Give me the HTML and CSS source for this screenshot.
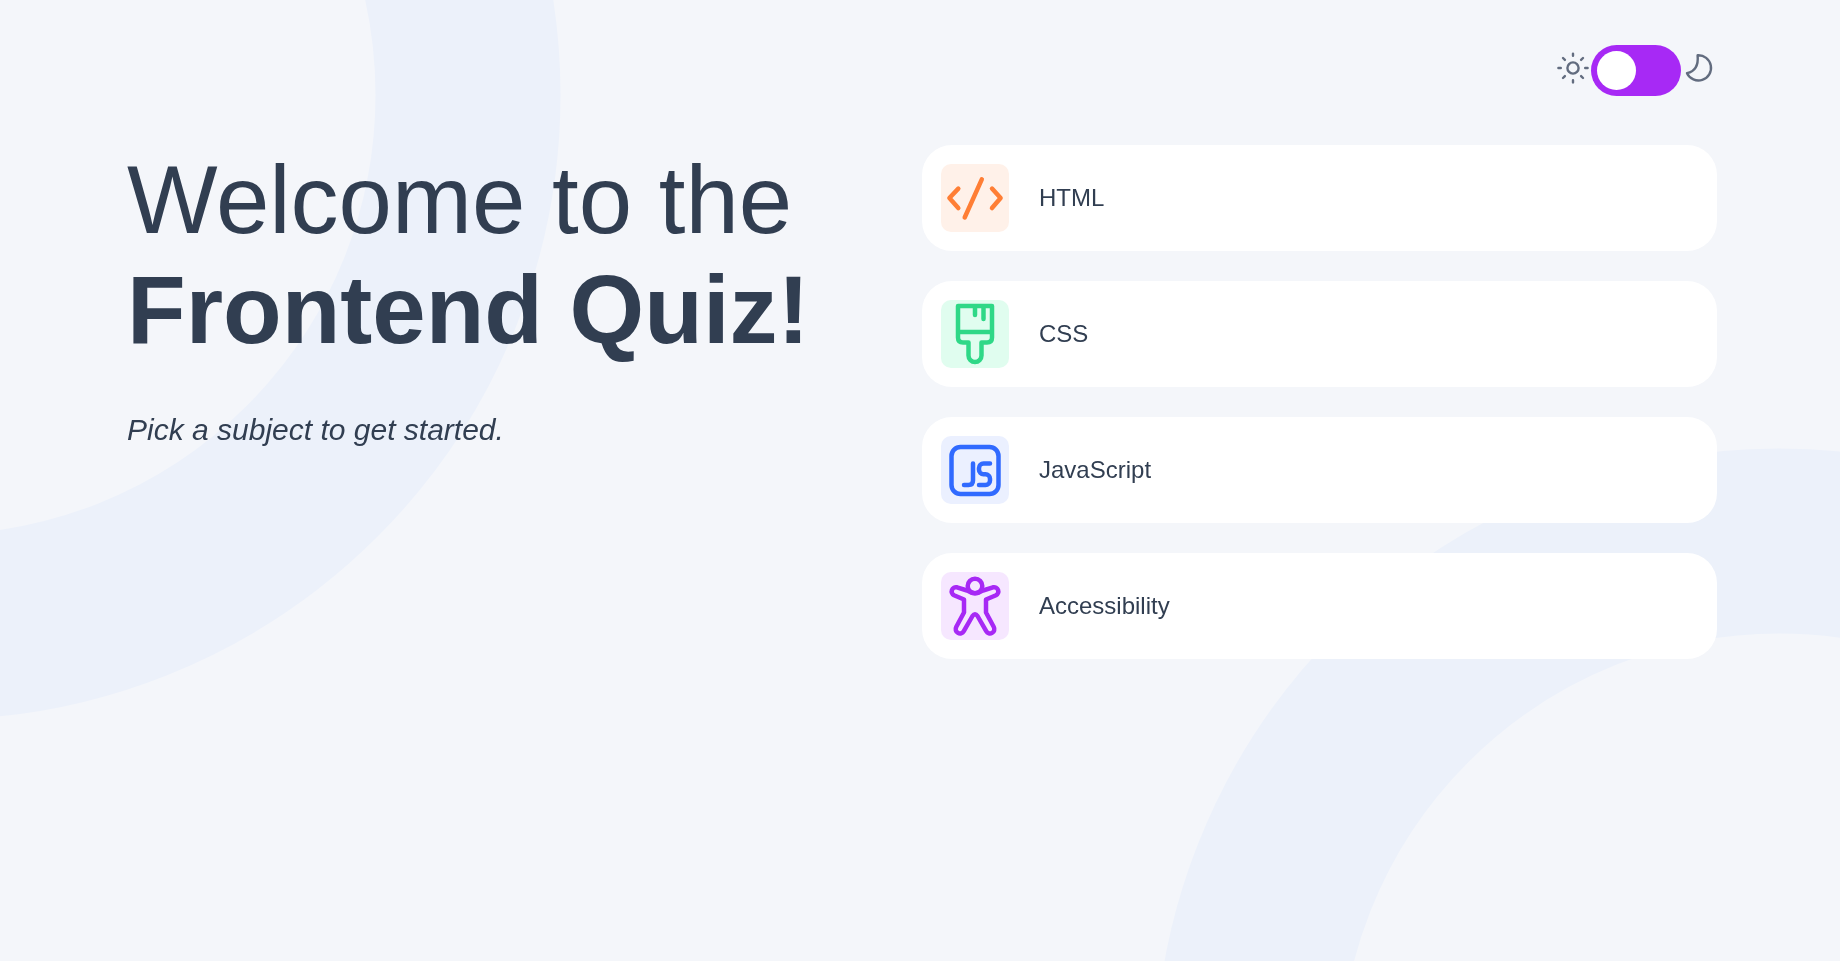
FILE: index.html
```html
<!DOCTYPE html>
<html lang="en">
<head>
<meta charset="utf-8">
<meta name="viewport" content="width=device-width, initial-scale=1">
<title>Frontend Quiz</title>
<link rel="stylesheet" href="styles.css">
</head>
<body>
<svg class="backdrop" viewBox="0 0 1840 1227" aria-hidden="true">
  <circle cx="-64" cy="95" r="532"/>
  <circle cx="1779" cy="1073" r="532"/>
</svg>
<div class="page">
  <header class="header">
    <svg class="mode-icon" viewBox="0 0 32 32" aria-hidden="true">
      <circle cx="16" cy="16" r="5.6"/>
      <path d="M16 1.6v2.2M16 28.2v2.2M1.4 16h2.4M28.2 16h2.4M6 6l1.9 1.9M24.1 24.1l1.9 1.9M6 26l1.9-1.9M24.1 7.9l1.9-1.9"/>
    </svg>
    <input class="switch" type="checkbox" role="switch" aria-label="Dark mode">
    <svg class="mode-icon" viewBox="2 0 32 32" aria-hidden="true">
      <path d="M16.6 3.3A12.6 12.6 0 1 1 6 21.2C13.5 19.5 17.6 13.5 16.600 3.3z"/>
    </svg>
  </header>
  <main class="main">
    <section class="intro">
      <h1 class="title">Welcome to the<br><strong>Frontend Quiz!</strong></h1>
      <p class="hint">Pick a subject to get started.</p>
    </section>
    <section class="subjects">
      <button class="subject" type="button">
        <svg class="badge html" viewBox="0 0 68 68" aria-hidden="true">
          <path d="M17.3 24.6L8.4 34l8.900 10M51 24.600L59.600 34l-8.600 10M40.800 15.300L23.700 53.500"/>
        </svg>
        <span>HTML</span>
      </button>
      <button class="subject" type="button">
        <svg class="badge css" viewBox="0 0 68 68" aria-hidden="true">
          <path d="M17 6h34v31.500q0 5-5 5H40.500v13a6.500 6.500 0 0 1-13 0v-13H22q-5 0-5-5zM17 32h34M34 6v9M42.500 6v13"/>
        </svg>
        <span>CSS</span>
      </button>
      <button class="subject" type="button">
        <svg class="badge js" viewBox="0 0 68 68" aria-hidden="true">
          <rect x="10.500" y="11" width="47" height="47" rx="9"/>
          <path d="M32 27.500v17q0 4.500-4.500 4.500H23M49 27.500H42.500a4.500 4.500 0 0 0-4.500 4.500v1.700a4.500 4.500 0 0 0 4.500 4.500h2a4.500 4.500 0 0 1 4.500 4.500v1.800a4.500 4.500 0 0 1-4.500 4.500H38"/>
        </svg>
        <span>JavaScript</span>
      </button>
      <button class="subject" type="button">
        <svg class="badge a11y" viewBox="0 0 68 68" aria-hidden="true">
          <circle cx="34" cy="14" r="7.300"/>
          <path d="M26 18.500l-10-3.200a4.300 4.300 0 0 0-3 8L23 27.500V40.500L15.200 55a4.300 4.300 0 0 0 7.600 4.200L31.500 44q2.500-3.500 5 0l8.700 15.200A4.300 4.300 0 0 0 52.800 55L45 40.500V27.500l10-4.200a4.300 4.300 0 0 0-3-8L42 18.500Q34 24 26 18.500z"/>
        </svg>
        <span>Accessibility</span>
      </button>
    </section>
  </main>
</div>
</body>
</html>
```
FILE: styles.css
```css
* {
  box-sizing: border-box;
}

body {
  margin: 0;
  min-height: 100vh;
  background: #f4f6fa;
  color: #313e51;
  font-family: "Liberation Sans", Arial, sans-serif;
}

.backdrop {
  position: fixed;
  top: 0;
  left: 0;
  z-index: -1;
  width: 100%;
  fill: none;
  stroke: #ecf1fa;
  stroke-width: 185;
}

.page {
  padding: 45px 123px 45px 127px;
}

.header {
  display: flex;
  justify-content: flex-end;
  gap: 2px;
  padding-right: 2px;
}

.mode-icon {
  width: 32px;
  height: 32px;
  margin-top: 7px;
  fill: none;
  stroke: #626c7f;
  stroke-width: 2.4;
  stroke-linecap: round;
  stroke-linejoin: round;
}

.switch {
  appearance: none;
  display: flex;
  align-items: center;
  width: 90px;
  height: 51px;
  margin: 0;
  padding: 6px;
  border-radius: 26px;
  background: #a729f5;
  cursor: pointer;
}

.switch::before {
  content: "";
  width: 39px;
  height: 39px;
  border-radius: 50%;
  background: #fff;
}

.switch:checked {
  justify-content: flex-end;
}

.main {
  display: grid;
  grid-template-columns: 1fr 1fr;
  margin-top: 49px;
}

.title {
  margin: 0;
  font-size: 96px;
  font-weight: 400;
  line-height: 110px;
}

.title strong {
  font-weight: 700;
}

.hint {
  margin: 48px 0 0;
  font-size: 30px;
  font-style: italic;
  line-height: 34px;
}

.subjects {
  display: flex;
  flex-direction: column;
  gap: 30px;
}

.subject {
  display: flex;
  align-items: center;
  gap: 30px;
  padding: 19px;
  border: 0;
  border-radius: 30px;
  background: #fff;
  color: inherit;
  font: inherit;
  font-size: 24px;
  text-align: left;
  cursor: pointer;
}

.badge {
  width: 68px;
  height: 68px;
  border-radius: 10px;
  fill: none;
  stroke-width: 4.5;
  stroke-linecap: round;
  stroke-linejoin: round;
}

.html {
  background: #fff1e9;
  stroke: #ff7e35;
}

.css {
  background: #e0fdef;
  stroke: #2fd887;
}

.js {
  background: #ebf0ff;
  stroke: #306aff;
}

.a11y {
  background: #f6e7ff;
  stroke: #a729f5;
}
```
